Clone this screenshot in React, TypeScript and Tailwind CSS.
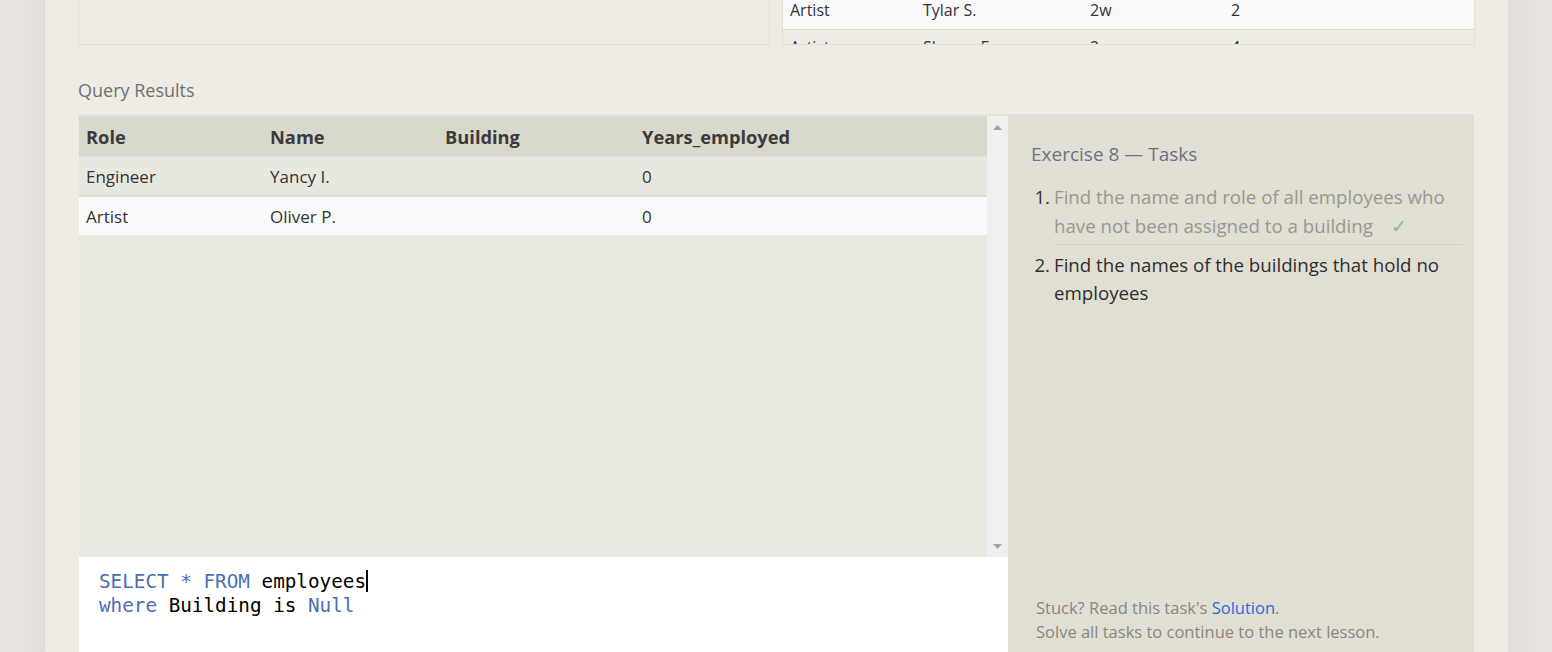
import React from "react";

const sans = { fontFamily: '"Open Sans", "Noto Sans", sans-serif' };

export default function App() {
  return (
    <div className="w-[1552px] h-[652px] overflow-hidden flex bg-[#e8e4e0]" style={sans}>
      <div className="w-[45px] shrink-0 bg-gradient-to-r from-[#e9e6e2] to-[#e2dedb]" />
      <div className="w-[1463px] shrink-0 bg-[#efece5] flex flex-col pl-[33px] pr-[33px]">
        {/* top boxes */}
        <div className="flex gap-[12px] h-[45px] shrink-0">
          <div className="w-[692px] h-[45px] border border-t-0 border-[#e3e0d8]" />
          <div className="w-[693px] h-[45px] border border-t-0 border-[#e3e0d8] overflow-hidden">
            <div className="-mt-[10px]">
              <div className="flex h-[40px] bg-[#f9f9f9] border-b border-[#dcdad4] text-[16px] text-[#333] items-center">
                <div className="w-[140px] pl-[7px]">Artist</div>
                <div className="w-[167px]">Tylar S.</div>
                <div className="w-[141px]">2w</div>
                <div>2</div>
              </div>
              <div className="flex h-[34px] text-[16px] text-[#333] items-center">
                <div className="w-[140px] pl-[7px]">Artist</div>
                <div className="w-[167px]">Sharon F.</div>
                <div className="w-[141px]">2w</div>
                <div>4</div>
              </div>
            </div>
          </div>
        </div>
        <div className="h-[69px] flex items-end pb-[15px] text-[18px] text-[#707070] leading-none">
          Query Results
        </div>
        <div className="flex flex-1 min-h-0">
          <div className="w-[930px] flex flex-col">
            <div className="flex h-[443px] border-t-2 border-[#e6e3dc]">
              <div className="w-[908px] ml-[1px] bg-[#eae9e1] flex flex-col">
                <div className="flex h-[41px] bg-[#d9d8cc] items-center pt-[1px] text-[18.3px] font-bold text-[#3b3b3b] border-b border-[#e3e1d8]">
                  <div className="w-[191px] pl-[7px]">Role</div>
                  <div className="w-[175px]">Name</div>
                  <div className="w-[197px]">Building</div>
                  <div>Years_employed</div>
                </div>
                <div className="flex h-[40px] bg-[#e9e8e0] items-center pt-[2px] text-[17px] text-[#333] border-b-2 border-[#dddcd5]">
                  <div className="w-[191px] pl-[7px]">Engineer</div>
                  <div className="w-[175px]">Yancy I.</div>
                  <div className="w-[197px]"></div>
                  <div>0</div>
                </div>
                <div className="flex h-[38px] bg-[#f9f9f9] items-center pt-[1px] text-[17px] text-[#333]">
                  <div className="w-[191px] pl-[7px]">Artist</div>
                  <div className="w-[175px]">Oliver P.</div>
                  <div className="w-[197px]"></div>
                  <div>0</div>
                </div>
              </div>
              <div className="w-[21px] bg-[#f0f0f0] flex flex-col items-center justify-between pt-[9px] pb-[8px]">
                <svg width="9" height="5" viewBox="0 0 9 5"><path d="M0 5 L4.5 0 L9 5 Z" fill="#a3a3a3" /></svg>
                <svg width="9" height="5" viewBox="0 0 9 5"><path d="M0 0 L4.5 5 L9 0 Z" fill="#a3a3a3" /></svg>
              </div>
            </div>
            <div className="flex-1 bg-white ml-[1px] pl-[20px] pt-[13px] text-[19.3px] leading-[24px]" style={{ fontFamily: '"DejaVu Sans Mono", "Liberation Mono", monospace' }}>
              <div className="whitespace-pre">
                <span className="text-[#4a6eb0]">SELECT</span>
                <span className="text-[#4a6eb0]"> * </span>
                <span className="text-[#4a6eb0]">FROM</span>
                <span className="text-black"> employees</span>
                <span className="inline-block w-[2px] h-[22px] bg-black align-middle -mt-[3px]" />
              </div>
              <div className="whitespace-pre">
                <span className="text-[#4a6eb0]">where</span>
                <span className="text-black"> Building is </span>
                <span className="text-[#4a6eb0]">Null</span>
              </div>
            </div>
          </div>
          <div className="w-[466px] bg-[#e1dfd4] flex flex-col pl-[23px] pr-[11px]">
            <div className="pt-[27px] text-[19px] text-[#6f7180] leading-[26px]">Exercise 8 — Tasks</div>
            <ol className="mt-[15px] text-[18.7px] leading-[29px]">
              <li className="flex">
                <span className="w-[23px] text-right pr-[4px] text-[#333]">1.</span>
                <div className="flex-1 text-[#9a9890] border-b border-[#d4d2c8] pb-[4px]">
                  Find the name and role of all employees who have not been assigned to a building
                  <span className="text-[#7cc47c] ml-[18px]">✓</span>
                </div>
              </li>
              <li className="flex mt-[6px] leading-[28px]">
                <span className="w-[23px] text-right pr-[4px] text-[#333]">2.</span>
                <div className="flex-1 text-[#2e2e2e]">Find the names of the buildings that hold no employees</div>
              </li>
            </ol>
            <div className="mt-auto pb-[8px] pl-[5px] text-[16.5px] leading-[24px] text-[#8b8680]">
              <div>
                Stuck? Read this task's <span className="text-[#2a6ae0]">Solution</span>.
              </div>
              <div>Solve all tasks to continue to the next lesson.</div>
            </div>
          </div>
        </div>
      </div>
      <div className="w-[44px] shrink-0 bg-gradient-to-r from-[#e1ddd9] to-[#e8e4e0]" />
    </div>
  );
}
